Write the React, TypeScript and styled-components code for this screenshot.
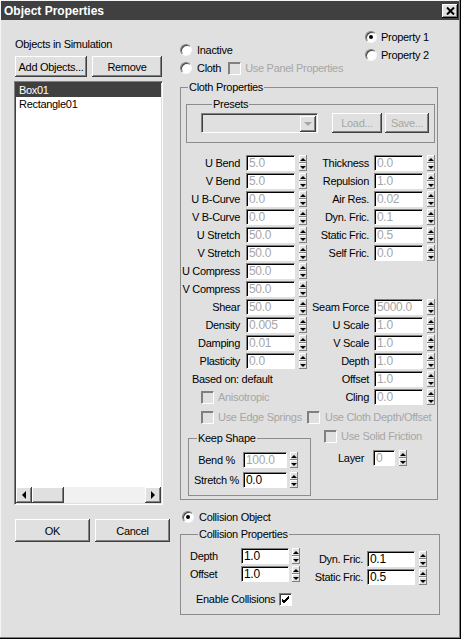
import React from "react";
import styled, { createGlobalStyle } from "styled-components";

const FACE = "#e0e0e0";
const DARK = "#404040";
const SHADOW = "#808080";
const DIS = "#a6a6a6";

const GlobalStyle = createGlobalStyle`
  html, body { margin: 0; padding: 0; background: ${FACE}; }
  body {
    font-family: "Liberation Sans", Arial, sans-serif;
    font-size: 11px;
    letter-spacing: -0.3px;
    color: #000;
  }
  * { box-sizing: border-box; }
`;

const Window = styled.div`
  width: 461px;
  height: 639px;
  background: ${FACE};
  display: flex;
  flex-direction: column;
  padding: 1px 2px 2px 1px;
  box-shadow: inset -1px -1px #000, inset -2px -2px ${SHADOW}, inset 1px 1px #f4f4f4;
`;

const TitleBar = styled.div`
  height: 19px;
  flex: none;
  background: ${DARK};
  color: #fff;
  display: flex;
  align-items: center;
  justify-content: space-between;
  padding: 0 1px 0 3px;
  font-weight: bold;
  font-size: 12px;
  letter-spacing: 0;
`;

const CloseButton = styled.div`
  width: 16px;
  height: 14px;
  background: ${FACE};
  box-shadow: inset -1px -1px #000, inset 1px 1px #fff, inset -2px -2px ${SHADOW};
  display: flex;
  align-items: center;
  justify-content: center;
`;

const Body = styled.div`
  display: flex;
  padding-left: 13px;
  gap: 8px;
`;

const LeftPane = styled.div`
  width: 156px;
  display: flex;
  flex-direction: column;
  padding-top: 18px;
`;

const Text = styled.div<{ $disabled?: boolean }>`
  line-height: 13px;
  white-space: nowrap;
  color: ${(p) => (p.$disabled ? DIS : "#000")};
`;

const Caption = styled(Text)`
  padding-left: 1px;
`;

const ButtonRow = styled.div<{ $top: number; $gap: number }>`
  display: flex;
  gap: ${(p) => p.$gap}px;
  margin-top: ${(p) => p.$top}px;
  padding-left: 1px;
`;

const Button = styled.div<{ $w: number; $h?: number; $disabled?: boolean }>`
  width: ${(p) => p.$w}px;
  height: ${(p) => p.$h ?? 21}px;
  display: flex;
  align-items: center;
  justify-content: center;
  color: ${(p) => (p.$disabled ? DIS : "#000")};
  box-shadow: inset -1px -1px ${DARK}, inset 1px 1px #fff, inset -2px -2px ${SHADOW};
  white-space: nowrap;
`;

const ListBox = styled.div`
  margin-top: 4px;
  width: 149px;
  height: 424px;
  background: #fff;
  border: 1px solid;
  border-color: ${SHADOW} #fff #fff ${SHADOW};
  box-shadow: inset 1px 1px ${DARK}, inset -1px -1px ${FACE};
  padding: 1px 1px 1px 1px;
  display: flex;
  flex-direction: column;
`;

const ListItem = styled.div<{ $selected?: boolean }>`
  height: 14px;
  line-height: 14px;
  padding-left: 3px;
  background: ${(p) => (p.$selected ? DARK : "transparent")};
  color: ${(p) => (p.$selected ? "#fff" : "#000")};
`;

const ListSpacer = styled.div`
  flex: 1;
`;

const ScrollBar = styled.div`
  height: 16px;
  display: flex;
  background: #f1f1f1;
`;

const ScrollBtn = styled.div<{ $w: number }>`
  width: ${(p) => p.$w}px;
  height: 16px;
  background: ${FACE};
  box-shadow: inset -1px -1px ${DARK}, inset 1px 1px #fff, inset -2px -2px ${SHADOW};
  display: flex;
  align-items: center;
  justify-content: center;
`;

const ScrollTrack = styled.div`
  flex: 1;
`;

const TriLeft = styled.div`
  width: 0;
  height: 0;
  border-top: 4px solid transparent;
  border-bottom: 4px solid transparent;
  border-right: 4px solid #000;
`;

const TriRight = styled.div`
  width: 0;
  height: 0;
  border-top: 4px solid transparent;
  border-bottom: 4px solid transparent;
  border-left: 4px solid #000;
`;

const RightPane = styled.div`
  width: 264px;
  display: flex;
  flex-direction: column;
`;

const TopRow = styled.div`
  height: 61px;
  display: flex;
`;

const RadioCol = styled.div<{ $w?: number; $top: number; $row: number }>`
  width: ${(p) => (p.$w ? `${p.$w}px` : "auto")};
  padding-top: ${(p) => p.$top}px;
  display: flex;
  flex-direction: column;
  & > * {
    height: ${(p) => p.$row}px;
  }
`;

const Row = styled.div<{ $left?: number; $gap?: number; $h?: number; $top?: number }>`
  display: flex;
  align-items: center;
  height: ${(p) => p.$h ?? 18}px;
  padding-left: ${(p) => p.$left ?? 0}px;
  gap: ${(p) => p.$gap ?? 5}px;
  margin-top: ${(p) => p.$top ?? 0}px;
`;

const RadioCircle = styled.div<{ $checked?: boolean }>`
  width: 12px;
  height: 12px;
  flex: none;
  border-radius: 50%;
  background: #fff;
  border: 1px solid;
  border-color: ${SHADOW} #f8f8f8 #f8f8f8 ${SHADOW};
  box-shadow: inset 1px 1px ${DARK};
  display: flex;
  align-items: center;
  justify-content: center;
  &::after {
    content: "";
    width: 4px;
    height: 4px;
    border-radius: 50%;
    background: ${(p) => (p.$checked ? "#000" : "transparent")};
  }
`;

const CheckBox = styled.div<{ $disabled?: boolean }>`
  width: 13px;
  height: 13px;
  flex: none;
  background: ${(p) => (p.$disabled ? FACE : "#fff")};
  border: 1px solid;
  border-color: ${SHADOW} #fff #fff ${SHADOW};
  box-shadow: inset 1px 1px ${(p) => (p.$disabled ? SHADOW : DARK)};
  display: flex;
  align-items: center;
  justify-content: center;
`;

const Group = styled.fieldset<{ $left: number; $w: number; $top: number; $pad: string }>`
  margin: ${(p) => p.$top}px 0 0 ${(p) => p.$left}px;
  width: ${(p) => p.$w}px;
  border: 1px solid #8c8c8c;
  padding: ${(p) => p.$pad};
  min-width: 0;
`;

const Legend = styled.legend<{ $left: number }>`
  margin-left: ${(p) => p.$left}px;
  padding: 0 1px;
  line-height: 13px;
  white-space: nowrap;
`;

const PresetRow = styled.div`
  display: flex;
  align-items: center;
`;

const Combo = styled.div`
  width: 117px;
  height: 20px;
  margin-right: 14px;
  border: 1px solid;
  border-color: ${SHADOW} #fff #fff ${SHADOW};
  box-shadow: inset 1px 1px ${DARK};
  display: flex;
  justify-content: flex-end;
  padding: 1px 1px 1px 1px;
`;

const ComboBtn = styled.div`
  width: 16px;
  height: 16px;
  margin-top: 1px;
  box-shadow: inset -1px -1px ${DARK}, inset 1px 1px #fff, inset -2px -2px ${SHADOW};
  display: flex;
  align-items: center;
  justify-content: center;
`;

const TriDown = styled.div<{ $c?: string; $s?: number }>`
  width: 0;
  height: 0;
  border-left: ${(p) => p.$s ?? 3}px solid transparent;
  border-right: ${(p) => p.$s ?? 3}px solid transparent;
  border-top: ${(p) => p.$s ?? 3}px solid ${(p) => p.$c ?? "#000"};
`;

const TriUp = styled.div`
  width: 0;
  height: 0;
  border-left: 3px solid transparent;
  border-right: 3px solid transparent;
  border-bottom: 3px solid #000;
`;

const SpinGrid = styled.div`
  margin-top: 11px;
  display: grid;
  grid-template-columns: 65px 61px 67px 61px;
  grid-auto-rows: 18px;
  align-items: center;
`;

const GridLabel = styled(Text)<{ $pr: number }>`
  text-align: right;
  padding-right: ${(p) => p.$pr}px;
`;

const GridSpan = styled.div<{ $left: number }>`
  grid-column: span 2;
  padding-left: ${(p) => p.$left}px;
  display: flex;
  align-items: center;
  gap: 4px;
`;

const SpinWrap = styled.div<{ $gap: number }>`
  display: flex;
  align-items: center;
  gap: ${(p) => p.$gap}px;
`;

const Field = styled.div<{ $w: number; $disabled?: boolean }>`
  width: ${(p) => p.$w}px;
  height: 16px;
  background: #fff;
  border: 1px solid;
  border-color: ${SHADOW} #fff #fff ${SHADOW};
  box-shadow: inset 1px 1px #000;
  padding: 0 0 0 2px;
  line-height: 15px;
  font-size: 12px;
  color: ${(p) => (p.$disabled ? DIS : "#000")};
  overflow: hidden;
  white-space: nowrap;
`;

const Arrows = styled.div`
  width: 8px;
  height: 16px;
  display: flex;
  flex-direction: column;
`;

const ArrowHalf = styled.div`
  flex: 1;
  background: ${FACE};
  box-shadow: inset -1px -1px ${SHADOW}, inset 1px 1px #fff;
  display: flex;
  align-items: center;
  justify-content: center;
`;

const BottomSection = styled.div`
  display: flex;
  align-items: flex-start;
`;

const SideCol = styled.div`
  display: flex;
  flex-direction: column;
  margin-left: 13px;
  padding-top: 1px;
`;

const FixedLabel = styled(Text)<{ $w: number; $pr: number; $align?: string }>`
  width: ${(p) => p.$w}px;
  padding-right: ${(p) => p.$pr}px;
  text-align: ${(p) => p.$align ?? "right"};
  flex: none;
`;

const CollisionGrid = styled.div`
  display: flex;
`;

const Column = styled.div<{ $top?: number }>`
  display: flex;
  flex-direction: column;
  margin-top: ${(p) => p.$top ?? 0}px;
`;

function Spin({ value, disabled, w = 49, gap = 4 }: { value: string; disabled?: boolean; w?: number; gap?: number }) {
  return (
    <SpinWrap $gap={gap}>
      <Field $w={w} $disabled={disabled}>{value}</Field>
      <Arrows>
        <ArrowHalf><TriUp /></ArrowHalf>
        <ArrowHalf><TriDown /></ArrowHalf>
      </Arrows>
    </SpinWrap>
  );
}

function Check({ checked, disabled }: { checked?: boolean; disabled?: boolean }) {
  return (
    <CheckBox $disabled={disabled}>
      {checked && (
        <svg width="9" height="9" viewBox="0 0 9 9">
          <path d="M1 4 L3 6 L8 1 M1 5 L3 7 L8 2 M1 6 L3 8 L8 3" stroke="#000" strokeWidth="1" fill="none" />
        </svg>
      )}
    </CheckBox>
  );
}

type Item = [string, string] | null;

const leftRows: Item[] = [
  ["U Bend", "5.0"],
  ["V Bend", "5.0"],
  ["U B-Curve", "0.0"],
  ["V B-Curve", "0.0"],
  ["U Stretch", "50.0"],
  ["V Stretch", "50.0"],
  ["U Compress", "50.0"],
  ["V Compress", "50.0"],
  ["Shear", "50.0"],
  ["Density", "0.005"],
  ["Damping", "0.01"],
  ["Plasticity", "0.0"],
];

const rightRows: Item[] = [
  ["Thickness", "0.0"],
  ["Repulsion", "1.0"],
  ["Air Res.", "0.02"],
  ["Dyn. Fric.", "0.1"],
  ["Static Fric.", "0.5"],
  ["Self Fric.", "0.0"],
  null,
  null,
  ["Seam Force", "5000.0"],
  ["U Scale", "1.0"],
  ["V Scale", "1.0"],
  ["Depth", "1.0"],
  ["Offset", "1.0"],
  ["Cling", "0.0"],
];

export default function App() {
  const cells: React.ReactNode[] = [];
  for (let i = 0; i < 14; i++) {
    const l = leftRows[i];
    if (l) {
      cells.push(<GridLabel key={`ll${i}`} $pr={6}>{l[0]}</GridLabel>);
      cells.push(<Spin key={`ls${i}`} value={l[1]} disabled />);
    } else if (i === 12) {
      cells.push(<GridSpan key="based" $left={11}><Text>Based on: default</Text></GridSpan>);
    } else {
      cells.push(
        <GridSpan key="aniso" $left={20}>
          <Check disabled />
          <Text $disabled>Anisotropic</Text>
        </GridSpan>
      );
    }
    const r = rightRows[i];
    if (r) {
      cells.push(<GridLabel key={`rl${i}`} $pr={5}>{r[0]}</GridLabel>);
      cells.push(<Spin key={`rs${i}`} value={r[1]} disabled />);
    } else {
      cells.push(<div key={`re${i}`} />, <div key={`rf${i}`} />);
    }
  }

  return (
    <>
      <GlobalStyle />
      <Window>
        <TitleBar>
          <span>Object Properties</span>
          <CloseButton>
            <svg width="9" height="8" viewBox="0 0 9 8">
              <path d="M1 0.5 L8 7.5 M8 0.5 L1 7.5" stroke="#000" strokeWidth="2" />
            </svg>
          </CloseButton>
        </TitleBar>
        <Body>
          <LeftPane>
            <Caption>Objects in Simulation</Caption>
            <ButtonRow $top={5} $gap={5}>
              <Button $w={72}>Add Objects...</Button>
              <Button $w={70}>Remove</Button>
            </ButtonRow>
            <ListBox>
              <ListItem $selected>Box01</ListItem>
              <ListItem>Rectangle01</ListItem>
              <ListSpacer />
              <ScrollBar>
                <ScrollBtn $w={16}><TriLeft /></ScrollBtn>
                <ScrollBtn $w={32} />
                <ScrollTrack />
                <ScrollBtn $w={16}><TriRight /></ScrollBtn>
              </ScrollBar>
            </ListBox>
            <ButtonRow $top={14} $gap={5}>
              <Button $w={75} $h={23}>OK</Button>
              <Button $w={75} $h={23}>Cancel</Button>
            </ButtonRow>
          </LeftPane>

          <RightPane>
            <TopRow>
              <RadioCol $w={187} $top={21} $row={18}>
                <Row $left={2}>
                  <RadioCircle />
                  <Text>Inactive</Text>
                </Row>
                <Row $left={2}>
                  <RadioCircle />
                  <Text>Cloth</Text>
                  <Row $left={2} $gap={4}>
                    <Check disabled />
                    <Text $disabled>Use Panel Properties</Text>
                  </Row>
                </Row>
              </RadioCol>
              <RadioCol $top={8} $row={17}>
                <Row $gap={4}>
                  <RadioCircle $checked />
                  <Text>Property 1</Text>
                </Row>
                <Row $gap={4}>
                  <RadioCircle />
                  <Text>Property 2</Text>
                </Row>
              </RadioCol>
            </TopRow>

            <Group $left={2} $w={258} $top={0} $pad="0 0 3px 0">
              <Legend $left={7}>Cloth Properties</Legend>
              <Group $left={5} $w={249} $top={4} $pad="2px 0 9px 14px">
                <Legend $left={11}>Presets</Legend>
                <PresetRow>
                  <Combo>
                    <ComboBtn><TriDown $c={DIS} $s={4} /></ComboBtn>
                  </Combo>
                  <Button $w={50} $h={20} $disabled>Load...</Button>
                  <Button $w={44} $h={20} $disabled style={{ marginLeft: 3 }}>Save...</Button>
                </PresetRow>
              </Group>

              <SpinGrid>{cells}</SpinGrid>

              <Row $left={20} $gap={0} $top={2}>
                <Row $gap={4} style={{ width: 106 }}>
                  <Check disabled />
                  <Text $disabled>Use Edge Springs</Text>
                </Row>
                <Row $gap={5}>
                  <Check disabled />
                  <Text $disabled>Use Cloth Depth/Offset</Text>
                </Row>
              </Row>

              <BottomSection>
                <Group $left={7} $w={123} $top={6} $pad="5px 0 5px 0">
                  <Legend $left={8}>Keep Shape</Legend>
                  <Row $h={20} $gap={0}>
                    <FixedLabel $w={54} $pr={8}>Bend %</FixedLabel>
                    <Spin value="100.0" disabled w={44} gap={3} />
                  </Row>
                  <Row $h={20} $gap={0}>
                    <FixedLabel $w={54} $pr={4}>Stretch %</FixedLabel>
                    <Spin value="0.0" w={44} gap={3} />
                  </Row>
                </Group>
                <SideCol>
                  <Row $gap={4}>
                    <Check disabled />
                    <Text $disabled>Use Solid Friction</Text>
                  </Row>
                  <Row $left={14} $gap={9} $top={4}>
                    <Text>Layer</Text>
                    <Spin value="0" disabled w={22} gap={4} />
                  </Row>
                </SideCol>
              </BottomSection>
            </Group>

            <Row $left={4} $top={8} $gap={5}>
              <RadioCircle $checked />
              <Text>Collision Object</Text>
            </Row>

            <Group $left={2} $w={260} $top={2} $pad="6px 0 6px 9px">
              <Legend $left={8}>Collision Properties</Legend>
              <CollisionGrid>
                <Column>
                  <Row $gap={0}>
                    <FixedLabel $w={51} $pr={0} $align="left">Depth</FixedLabel>
                    <Spin value="1.0" w={48} gap={3} />
                  </Row>
                  <Row $gap={0}>
                    <FixedLabel $w={51} $pr={0} $align="left">Offset</FixedLabel>
                    <Spin value="1.0" w={48} gap={3} />
                  </Row>
                </Column>
                <Column $top={3}>
                  <Row $gap={0}>
                    <FixedLabel $w={67} $pr={4}>Dyn. Fric.</FixedLabel>
                    <Spin value="0.1" w={48} gap={4} />
                  </Row>
                  <Row $gap={0}>
                    <FixedLabel $w={67} $pr={4}>Static Fric.</FixedLabel>
                    <Spin value="0.5" w={48} gap={4} />
                  </Row>
                </Column>
              </CollisionGrid>
              <Row $left={6} $top={4} $gap={4}>
                <Text>Enable Collisions</Text>
                <Check checked />
              </Row>
            </Group>
          </RightPane>
        </Body>
      </Window>
    </>
  );
}
